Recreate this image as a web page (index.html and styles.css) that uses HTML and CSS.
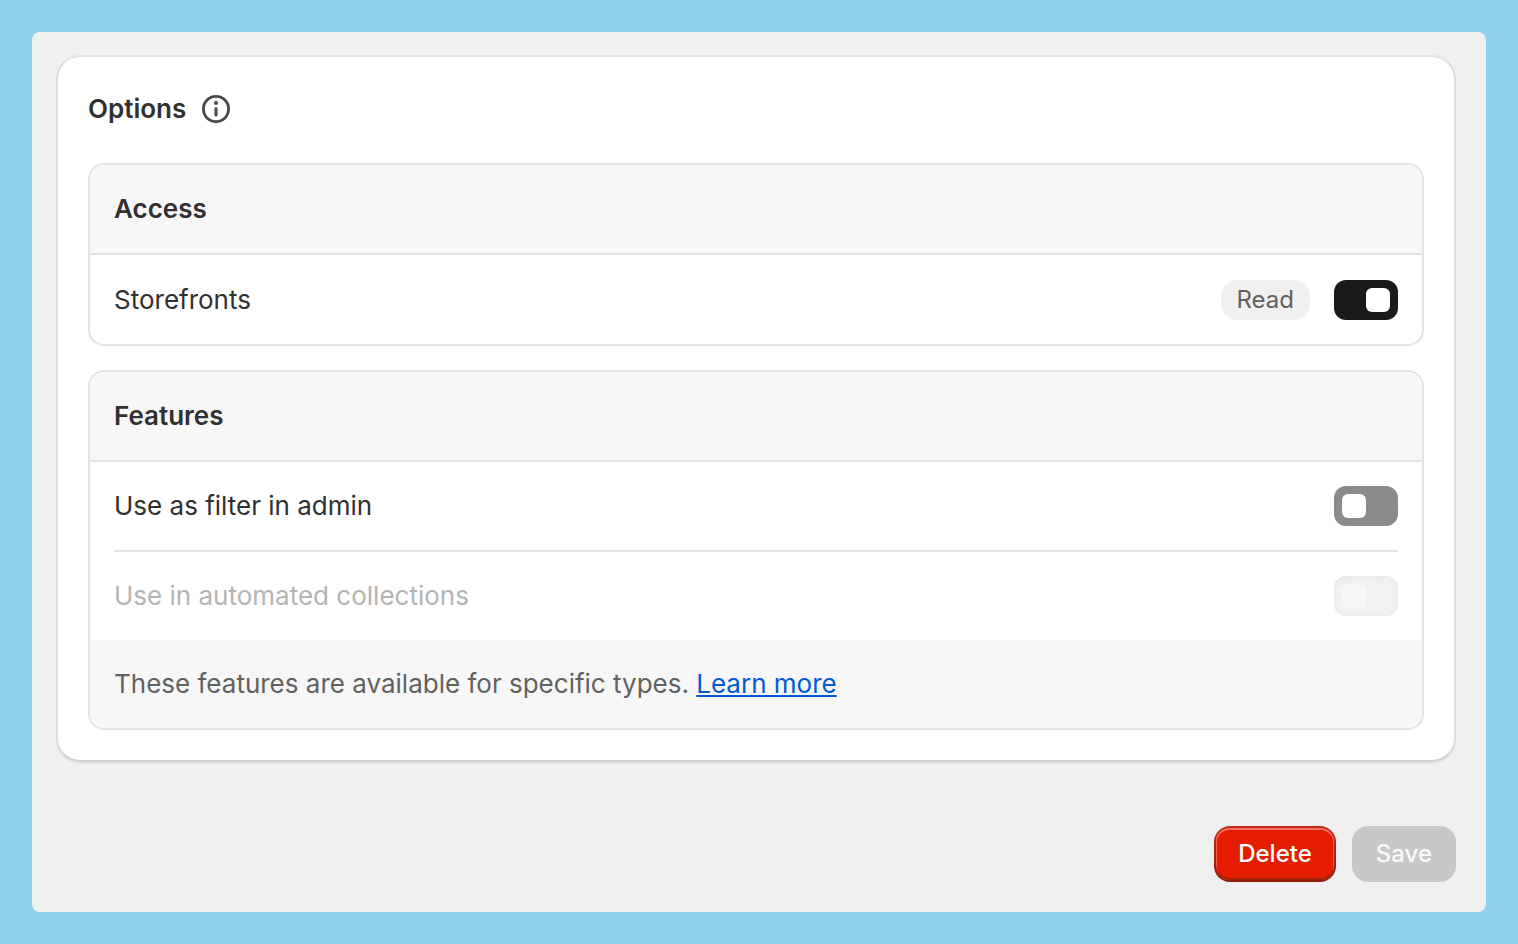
FILE: index.html
```html
<!DOCTYPE html>
<html lang="en">
<head>
<meta charset="utf-8">
<title>Options</title>
<link rel="stylesheet" href="styles.css">
</head>
<body>
<main class="page">
  <section class="card">
    <header class="card-header">
      <h1 class="title">Options</h1>
      <button class="info" type="button" aria-label="About options">
        <svg class="info-icon" viewBox="0 0 28 28" aria-hidden="true">
          <circle cx="14" cy="14" r="12.6" fill="none" stroke="currentColor" stroke-width="2.8"/>
          <circle cx="14" cy="8" r="2.1" fill="currentColor"/>
          <path d="M14 13.500V20" stroke="currentColor" stroke-width="3" stroke-linecap="round"/>
        </svg>
      </button>
    </header>
    <section class="group">
      <h2 class="group-title">Access</h2>
      <div class="row row-single">
        <label class="row-label" for="storefronts">Storefronts</label>
        <span class="badge">Read</span>
        <input class="toggle" id="storefronts" type="checkbox" role="switch" checked>
      </div>
    </section>
    <section class="group">
      <h2 class="group-title">Features</h2>
      <div class="row">
        <label class="row-label" for="filter">Use as filter in admin</label>
        <input class="toggle" id="filter" type="checkbox" role="switch">
      </div>
      <hr class="divider">
      <div class="row">
        <label class="row-label row-label-disabled" for="collections">Use in automated collections</label>
        <input class="toggle" id="collections" type="checkbox" role="switch" disabled>
      </div>
      <p class="note">These features are available for specific types. <a class="link" href="#">Learn more</a></p>
    </section>
  </section>
  <footer class="actions">
    <button class="button button-delete" type="button">Delete</button>
    <button class="button button-save" type="button" disabled>Save</button>
  </footer>
</main>
</body>
</html>
```
FILE: styles.css
```css
* { box-sizing: border-box; }
body {
  margin: 0;
  padding: 32px;
  min-height: 100vh;
  background: #90d1f0;
  color: #303030;
  font: 400 26px/40px Inter, sans-serif;
}
.page {
  padding: 23px 30px 30px 24px;
  border-radius: 8px;
  background: #f0f0f0;
}
.card {
  display: flex;
  flex-direction: column;
  gap: 24px;
  padding: 32px 30px 30px;
  border: 2px solid #dedede;
  border-top-color: #e3e3e3;
  border-bottom-color: #d0d0d0;
  border-radius: 24px;
  background: #fff;
  box-shadow: 0 2px 0 #e6e6e6;
}
.card-header {
  display: flex;
  align-items: center;
  gap: 16px;
  margin-bottom: 10px;
}
.title, .group-title {
  margin: 0;
  font-size: 26px;
  font-weight: 600;
}
.info {
  display: flex;
  padding: 0;
  border: 0;
  background: none;
  color: #4a4a4a;
}
.info-icon { width: 28px; height: 28px; }
.group {
  overflow: hidden;
  border: 2px solid #e3e3e3;
  border-radius: 16px;
}
.group-title {
  padding: 24px;
  border-bottom: 2px solid #e3e3e3;
  background: #f7f7f7;
}
.row {
  display: flex;
  align-items: center;
  gap: 24px;
  padding: 24px;
}
.row-single { padding-top: 25px; }
.row-label { flex: 1; }
.row-label-disabled { color: #b5b5b5; }
.badge {
  padding: 0 16px;
  border-radius: 16px;
  background: #f0f0f0;
  color: #616161;
  font-size: 24px;
}
.toggle {
  appearance: none;
  display: flex;
  width: 64px;
  height: 40px;
  margin: 0;
  padding: 8px;
  border-radius: 12px;
  background: #8a8a8a;
}
.toggle::before {
  content: "";
  width: 24px;
  height: 24px;
  border-radius: 6px;
  background: #fff;
}
.toggle:checked { justify-content: flex-end; background: #1a1a1a; }
.toggle:disabled {
  background: #f1f1f1;
  box-shadow: inset 0 2px 6px #e8e8e8, inset 0 0 3px #ececec;
}
.toggle:disabled::before { background: #f7f7f7; }
.divider {
  height: 2px;
  margin: 0 24px;
  border: 0;
  background: #e3e3e3;
}
.note {
  margin: 0;
  padding: 24px;
  background: #f7f7f7;
  color: #616161;
}
.link { color: #005bd3; }
.actions {
  display: flex;
  justify-content: flex-end;
  gap: 16px;
  margin-top: 64px;
}
.button {
  padding: 8px 24px;
  border: 0;
  border-radius: 16px;
  color: #fff;
  font: 500 24px/40px Inter, sans-serif;
}
.button-delete {
  background: linear-gradient(#e51c00, #e51c00) padding-box, linear-gradient(#c22a18, #8e1f0b) border-box;
  border: 2px solid transparent;
  padding: 6px 22px;
  box-shadow: inset 0 -2px 0 #9c1f0c, inset 0 2px 0 #f6705e, inset 1px 0 0 #f0604c, inset -1px 0 0 #f0604c;
}
.button-save { background: #c8c8c8; color: #fafafa; }
```
